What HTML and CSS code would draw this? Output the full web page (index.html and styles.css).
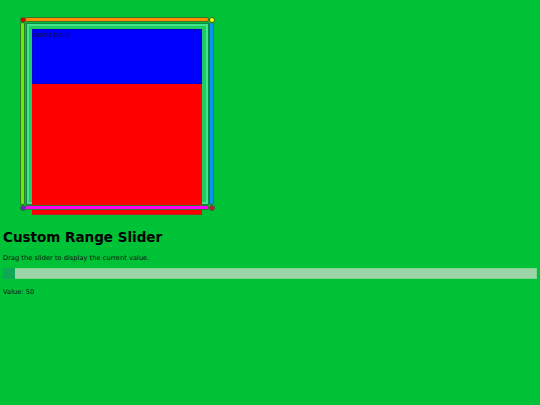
FILE: index.html
```html
<!DOCTYPE html>
<html>
<head>
<meta charset="utf-8">
<link rel="stylesheet" href="styles.css">
</head>
<body>
<div class="frame">
  <div class="dot dot-tl"></div>
  <div class="bar bar-top"></div>
  <div class="dot dot-tr"></div>
  <div class="bar bar-left"></div>
  <div class="panel">
    <div class="box">
      <div class="box-top"><span class="label">penis balls</span></div>
      <div class="box-bottom"></div>
    </div>
  </div>
  <div class="bar bar-right"></div>
  <div class="dot dot-bl"></div>
  <div class="bar bar-bottom"></div>
  <div class="dot dot-br"></div>
</div>
<div class="content">
  <h1 class="title">Custom Range Slider</h1>
  <p class="desc">Drag the slider to display the current value.</p>
  <div class="slider"><div class="thumb"></div></div>
  <p class="value">Value: 50</p>
</div>
</body>
</html>
```
FILE: styles.css
```css
html, body {
  margin: 0;
  padding: 0;
  background: #00c236;
  font-family: "DejaVu Sans", sans-serif;
}
.frame {
  margin: 17px 0 0 20px;
  width: 194px;
  height: 193px;
  display: grid;
  grid-template-columns: 5px 1fr 5px;
  grid-template-rows: 5px 1fr 5px;
}
.bar {
  box-sizing: border-box;
  border: 1px solid #2f7a2a;
  border-radius: 2px;
}
.bar-top { background: #ff8c00; }
.bar-bottom { background: #ff00ff; }
.bar-left { background: #66ee00; }
.bar-right { background: #0099ee; }
.dot {
  width: 6px;
  height: 6px;
  margin: -0.5px;
  box-sizing: border-box;
  border: 1px solid #3a6a2a;
  border-radius: 50%;
  z-index: 2;
}
.dot-tl { background: #dd0000; }
.dot-tr { background: #ffff00; }
.dot-bl { background: #6622cc; }
.dot-br { background: #cc1144; }
.panel {
  margin: 1px 0 0 1px;
  box-sizing: border-box;
  border: 1px solid #118844;
  box-shadow: inset 0 0 0 2px #44e48f;
  background: #1fcc62;
  padding: 5px 6px 0 5px;
  height: 182px;
}
.box {
  height: 186px;
  display: flex;
  flex-direction: column;
}
.box-top {
  height: 55px;
  background: #0000ff;
  box-shadow: inset 0 0 0 1px #0000cc;
}
.box-bottom {
  flex: 1;
  background: #ff0000;
  box-shadow: inset 0 -1px 0 #bb2222;
}
.label {
  display: block;
  font-size: 7px;
  line-height: 8px;
  padding: 2px 0 0 1px;
  color: #111144;
}
.content {
  padding: 0 3px;
}
.title {
  margin: 18px 0 0 0;
  font-size: 13.5px;
  font-weight: bold;
  line-height: 18px;
  color: #000;
}
.desc {
  margin: 8px 0 0 0;
  font-size: 6.7px;
  line-height: 9px;
  color: #111;
}
.slider {
  margin-top: 5px;
  height: 11px;
  background: #9dd3a8;
  border: 1px solid #7fd48f;
  box-sizing: border-box;
  display: flex;
}
.thumb {
  flex: 0 0 12px;
  margin: -1px 0 -1px -1px;
  background: #0fa855;
}
.value {
  margin: 9px 0 0 0;
  font-size: 6.7px;
  line-height: 9px;
  color: #111;
}
```
